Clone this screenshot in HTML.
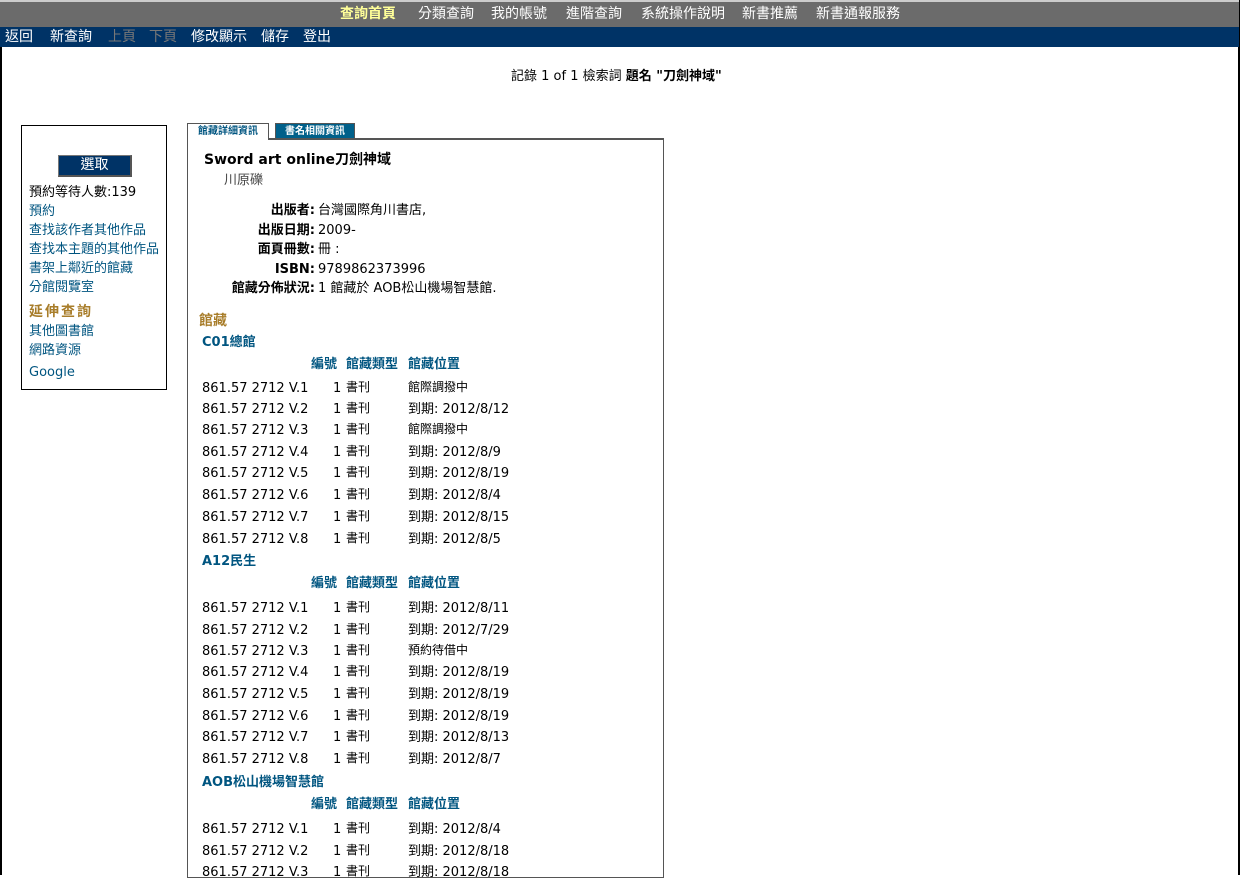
<!DOCTYPE html>
<html><head><meta charset="utf-8"><style>
*{margin:0;padding:0;box-sizing:border-box}
body{width:1243px;height:875px;overflow:hidden;background:#fff;font-family:"DejaVu Sans","Noto Sans CJK TC",sans-serif;font-size:12px;color:#000;position:relative}
.a{position:absolute;white-space:nowrap;line-height:16px}
.top{position:absolute;left:0;top:0;width:1239px;height:27px;background:#6b6b6b;border-top:2px solid #ccc}
.nav{position:absolute;left:0;top:27px;width:1239px;height:20px;background:#003366}
.tb{font-size:14px;color:#fff;font-family:"Noto Sans CJK TC",sans-serif;top:5px}
.nb{font-size:14px;color:#fff;font-family:"Noto Sans CJK TC",sans-serif;top:28px}
.lk{color:#005580;font-size:13px}
.bl{color:#005580;font-weight:bold;font-size:13px}
.c{font-size:13px}
</style></head><body>
<div style="position:absolute;left:0;top:0;width:2px;height:875px;background:#000"></div>
<div style="position:absolute;left:1238px;top:0;width:2px;height:875px;background:#000"></div>
<div class="top"></div><div class="nav"></div>
<div class="a tb" style="left:340px;color:#ffff99;font-weight:bold">查詢首頁</div>
<div class="a tb" style="left:418px">分類查詢</div>
<div class="a tb" style="left:491px">我的帳號</div>
<div class="a tb" style="left:566px">進階查詢</div>
<div class="a tb" style="left:641px">系統操作說明</div>
<div class="a tb" style="left:742px">新書推薦</div>
<div class="a tb" style="left:816px">新書通報服務</div>
<div class="a nb" style="left:5px">返回</div>
<div class="a nb" style="left:50px">新查詢</div>
<div class="a nb" style="left:108px;color:#777">上頁</div>
<div class="a nb" style="left:149px;color:#777">下頁</div>
<div class="a nb" style="left:191px">修改顯示</div>
<div class="a nb" style="left:261px">儲存</div>
<div class="a nb" style="left:303px">登出</div>
<div class="a" style="left:511px;top:69px;font-size:13px">記錄 1 of 1 檢索詞 <b>題名 "刀劍神域"</b></div>

<div class="a" style="left:21px;top:125px;width:146px;height:265px;border:1px solid #000"></div>
<div class="a" style="left:58px;top:155px;width:74px;height:22px;background:#003366;border:1px solid #777;border-right:2px solid #555;border-bottom:2px solid #555;color:#fff;font-size:14px;text-align:center;line-height:18px">選取</div>
<div class="a c" style="left:29px;top:185px">預約等待人數:139</div>
<div class="a lk" style="left:29px;top:204px">預約</div>
<div class="a lk" style="left:29px;top:223px">查找該作者其他作品</div>
<div class="a lk" style="left:29px;top:242px">查找本主題的其他作品</div>
<div class="a lk" style="left:29px;top:261px">書架上鄰近的館藏</div>
<div class="a lk" style="left:29px;top:280px">分館閱覽室</div>
<div class="a" style="left:29px;top:304px;color:#a87d2a;font-weight:bold;font-size:14px;letter-spacing:2px">延伸查詢</div>
<div class="a lk" style="left:29px;top:324px">其他圖書館</div>
<div class="a lk" style="left:29px;top:343px">網路資源</div>
<div class="a lk" style="left:29px;top:365px">Google</div>

<div class="a" style="left:187px;top:138px;width:477px;height:740px;border:1px solid #555;border-top:2px solid #555"></div>
<div class="a" style="left:187px;top:123px;width:82px;height:17px;background:#fff;border:1px solid #555;border-bottom:none;color:#005580;font-size:10px;font-weight:bold;text-align:center;line-height:16px">館藏詳細資訊</div>
<div class="a" style="left:275px;top:123px;width:80px;height:16px;background:#00608a;border:1px solid #555;color:#fff;font-size:10px;font-weight:bold;text-align:center;line-height:15px">書名相關資訊</div>
<div class="a" style="left:204px;top:152px;font-size:14px;font-weight:bold">Sword art online刀劍神域</div>
<div class="a" style="left:224px;top:173px;font-size:13px;color:#444">川原礫</div>
<div class="a c" style="left:201px;top:203px;width:114px;text-align:right;font-weight:bold">出版者:</div><div class="a c" style="left:318px;top:203px">台灣國際角川書店,</div>
<div class="a c" style="left:201px;top:223px;width:114px;text-align:right;font-weight:bold">出版日期:</div><div class="a c" style="left:318px;top:223px">2009-</div>
<div class="a c" style="left:201px;top:242px;width:114px;text-align:right;font-weight:bold">面頁冊數:</div><div class="a c" style="left:318px;top:242px">冊 :</div>
<div class="a c" style="left:201px;top:262px;width:114px;text-align:right;font-weight:bold">ISBN:</div><div class="a c" style="left:318px;top:262px">9789862373996</div>
<div class="a c" style="left:201px;top:281px;width:114px;text-align:right;font-weight:bold">館藏分佈狀況:</div><div class="a c" style="left:318px;top:281px">1 館藏於 AOB松山機場智慧館.</div>
<div class="a" style="left:199px;top:313px;color:#a87d2a;font-weight:bold;font-size:14px">館藏</div>

<div id="rows"></div>
<script>
var hd=[[335,"C01總館"],[554,"A12民生"],[775,"AOB松山機場智慧館"]];
var h="";
hd.forEach(function(x){h+='<div class="a bl" style="left:202px;top:'+x[0]+'px">'+x[1]+'</div>'+
'<div class="a bl" style="left:311px;top:'+(x[0]+22)+'px">編號</div><div class="a bl" style="left:346px;top:'+(x[0]+22)+'px">館藏類型</div><div class="a bl" style="left:408px;top:'+(x[0]+22)+'px">館藏位置</div>';});
var d=[[379,1,"館際調撥中"],[400,2,"到期: 2012/8/12"],[421,3,"館際調撥中"],[443,4,"到期: 2012/8/9"],[464,5,"到期: 2012/8/19"],[486,6,"到期: 2012/8/4"],[508,7,"到期: 2012/8/15"],[530,8,"到期: 2012/8/5"],
[599,1,"到期: 2012/8/11"],[621,2,"到期: 2012/7/29"],[642,3,"預約待借中"],[663,4,"到期: 2012/8/19"],[685,5,"到期: 2012/8/19"],[707,6,"到期: 2012/8/19"],[728,7,"到期: 2012/8/13"],[750,8,"到期: 2012/8/7"],
[820,1,"到期: 2012/8/4"],[842,2,"到期: 2012/8/18"],[863,3,"到期: 2012/8/18"]];
d.forEach(function(r){var y=r[0]+2;var sm=r[2].indexOf("到期")<0;
h+='<div class="a c" style="left:202px;top:'+y+'px">861.57 2712 V.'+r[1]+'</div><div class="a c" style="left:333px;top:'+y+'px">1</div><div class="a" style="left:346px;top:'+(y-2)+'px">書刊</div><div class="a" style="left:408px;top:'+(y-(sm?2:0))+'px;font-size:'+(sm?12:13)+'px">'+r[2]+'</div>';});
document.getElementById("rows").innerHTML=h;
</script>
</body></html>
